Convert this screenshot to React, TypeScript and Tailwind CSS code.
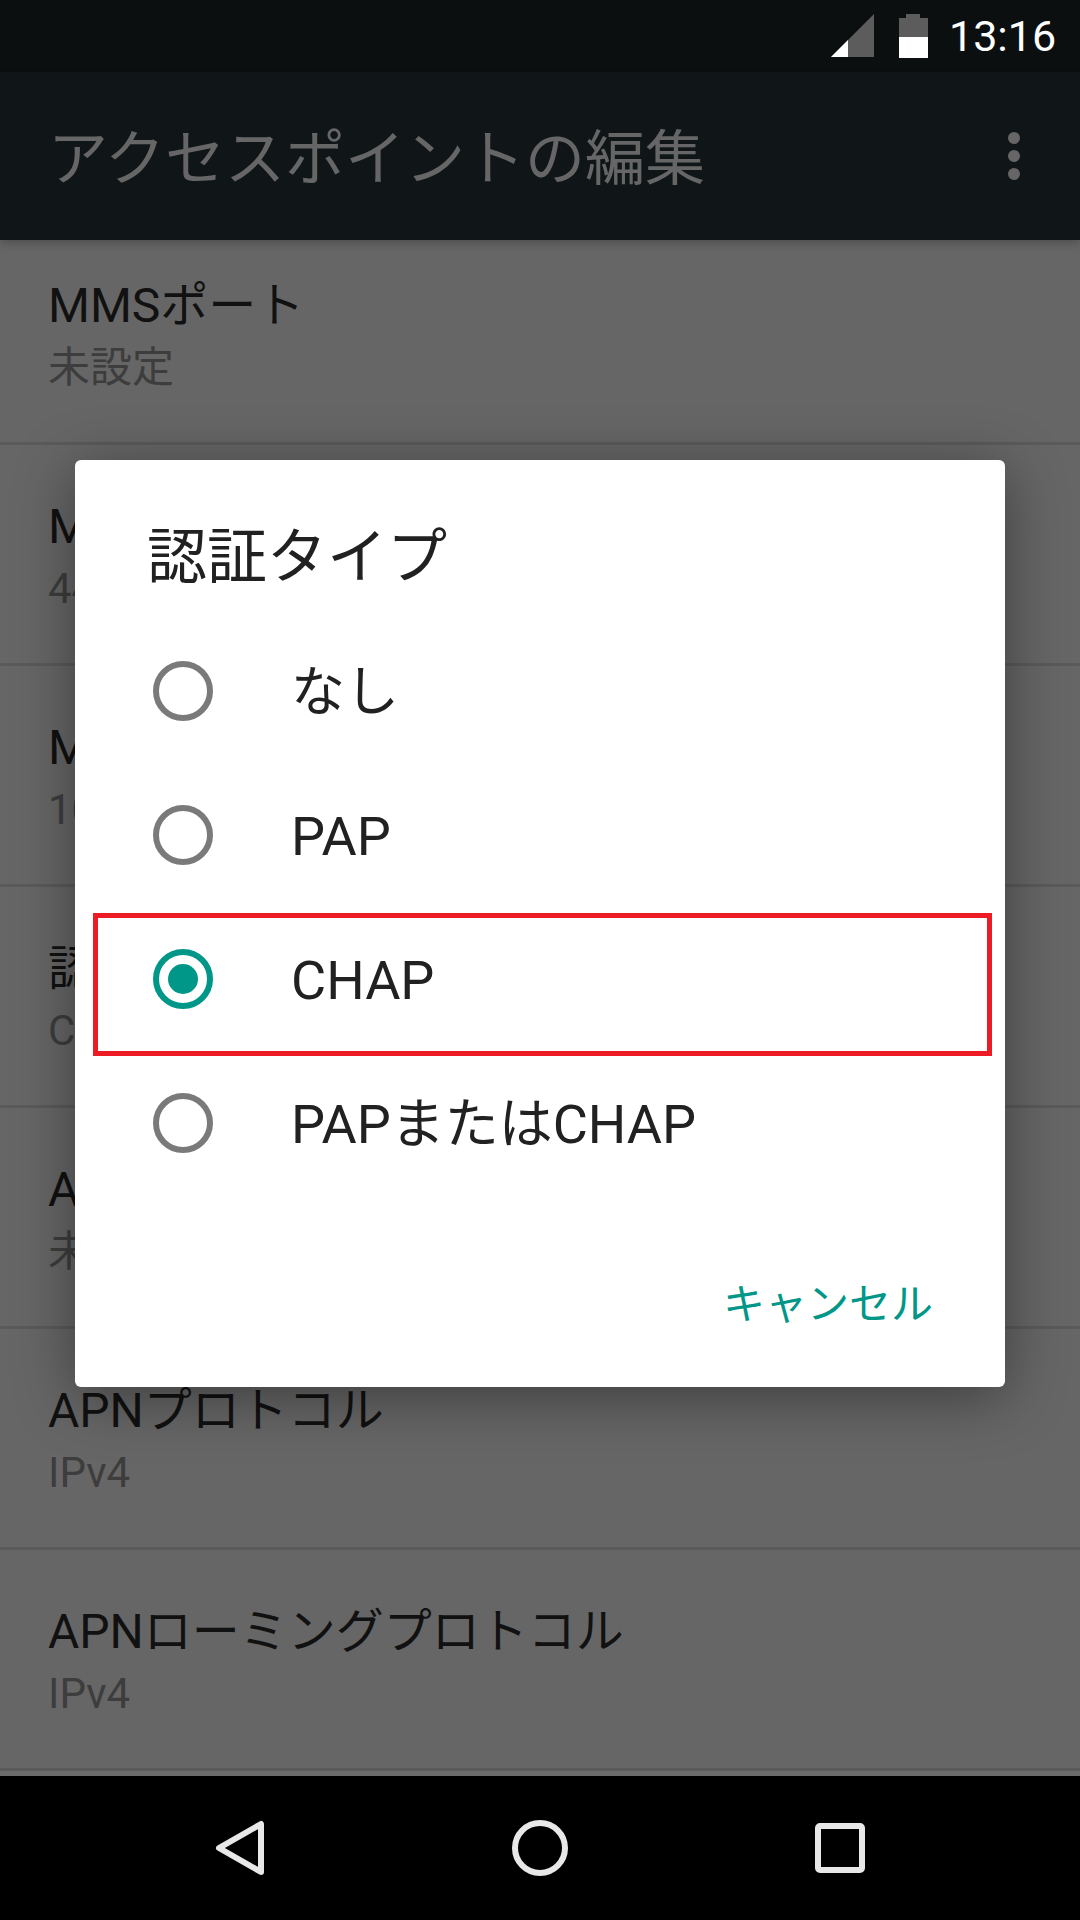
const rows = [
  { title: "MMSポート", sub: "未設定" },
  { title: "MMSプロキシ", sub: "442" },
  { title: "MCC", sub: "10" },
  { title: "認証タイプ", sub: "CHAP" },
  { title: "APNタイプ", sub: "未設定" },
  { title: "APNプロトコル", sub: "IPv4" },
  { title: "APNローミングプロトコル", sub: "IPv4" },
];

const options = [
  { label: "なし", checked: false },
  { label: "PAP", checked: false },
  { label: "CHAP", checked: true },
  { label: "PAPまたはCHAP", checked: false },
];

const Radio = ({ checked }: { checked: boolean }) => (
  <div
    className={`flex h-[60px] w-[60px] items-center justify-center rounded-full border-[6px] ${
      checked ? "border-[#009688]" : "border-[#7a7a7a]"
    }`}
  >
    {checked && <div className="h-[30px] w-[30px] rounded-full bg-[#009688]" />}
  </div>
);

export default function App() {
  return (
    <div className="relative flex h-[1920px] w-[1080px] flex-col overflow-hidden bg-[#6b6b6b] font-['Roboto','Noto_Sans_CJK_JP',sans-serif]">
      {/* status bar */}
      <div className="flex h-[72px] shrink-0 items-center bg-[#0c0f10] pl-[831px]">
        <svg width="44" height="44" viewBox="0 0 44 44" className="shrink-0">
          <path d="M0 43 L43 0 V43 Z" fill="#5c5c5c" />
          <path d="M0 43 L17 26 V43 Z" fill="#ffffff" />
        </svg>
        <svg width="29" height="44" viewBox="0 0 29 44" className="ml-[24px] shrink-0">
          <path d="M7 0 H21 V4 H29 V44 H0 V4 H7 Z" fill="#5c5c5c" />
          <rect x="0" y="23" width="29" height="21" fill="#ffffff" />
        </svg>
        <span className="ml-[21px] pt-[1px] text-[43px] leading-none text-white">13:16</span>
      </div>

      {/* app bar */}
      <div className="relative z-10 flex h-[168px] shrink-0 items-center justify-between bg-[#101618] pl-[48px] pr-[60px] shadow-[0_4px_8px_rgba(0,0,0,0.2)]">
        <span className="pt-[7px] text-[60px] leading-none text-[#666666]">アクセスポイントの編集</span>
        <div className="flex flex-col gap-[6px]">
          <div className="h-3 w-3 rounded-full bg-[#666666]" />
          <div className="h-3 w-3 rounded-full bg-[#666666]" />
          <div className="h-3 w-3 rounded-full bg-[#666666]" />
        </div>
      </div>

      {/* settings list behind the dialog, scrolled a little */}
      <div className="min-h-0 flex-1 overflow-hidden">
        <div className="-mt-[16px] bg-[#666666]">
          {rows.map((row) => (
            <div key={row.title} className="h-[221px] border-b-[3px] border-[#5a5a5a] pl-[48px] pt-[52px]">
              <div className="text-[48px] leading-[60px] text-[#111111]">{row.title}</div>
              <div className="pt-[1px] text-[42px] leading-[62px] text-[#3d3d3d]">{row.sub}</div>
            </div>
          ))}
        </div>
      </div>

      {/* nav bar */}
      <div className="flex h-[144px] shrink-0 items-center justify-center gap-[240px] bg-black">
        <svg width="60" height="60" viewBox="0 0 60 60" fill="none" stroke="#e8e8e8" strokeWidth="6" strokeLinejoin="round">
          <path d="M51 6 V54 L9 30 Z" />
        </svg>
        <svg width="60" height="60" viewBox="0 0 60 60" fill="none" stroke="#e8e8e8" strokeWidth="6">
          <circle cx="30" cy="30" r="25" />
        </svg>
        <svg width="60" height="60" viewBox="0 0 60 60" fill="none" stroke="#e8e8e8" strokeWidth="6" strokeLinejoin="round">
          <rect x="8" y="8" width="44" height="44" rx="2" />
        </svg>
      </div>

      {/* dialog */}
      <div className="absolute left-[75px] top-[460px] z-20 flex h-[927px] w-[930px] flex-col rounded-[6px] bg-white shadow-[0_10px_60px_rgba(0,0,0,0.4)]">
        <div className="pl-[72px] pt-[63px] text-[60px] leading-[70px] text-[#212121]">認証タイプ</div>
        <div className="mt-[26px] flex flex-col">
          {options.map((option) => (
            <div key={option.label} className="flex h-[144px] items-center pl-[78px]">
              <Radio checked={option.checked} />
              <span className="ml-[78px] pt-[3px] text-[54px] text-[#212121]">{option.label}</span>
            </div>
          ))}
        </div>
        <div className="mt-auto flex justify-end pb-[57px] pr-[72px]">
          <span className="text-[42px] leading-[50px] text-[#009688]">キャンセル</span>
        </div>
      </div>

      {/* red highlight */}
      <div className="absolute left-[93px] top-[913px] z-30 h-[143px] w-[899px] border-[5px] border-[#ed1c24]" />
    </div>
  );
}
